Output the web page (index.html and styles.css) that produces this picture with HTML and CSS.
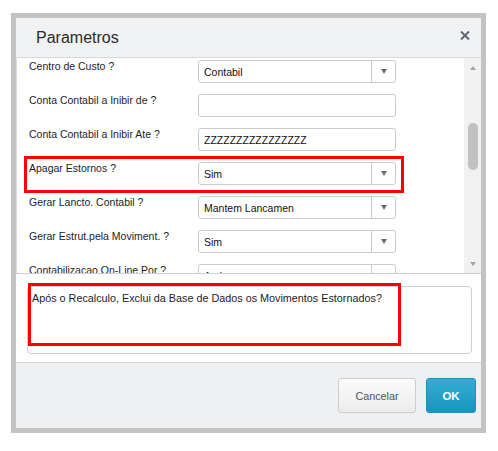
FILE: index.html
```html
<!DOCTYPE html>
<html lang="pt">
<head>
<meta charset="utf-8">
<title>Parametros</title>
<link rel="stylesheet" href="styles.css">
</head>
<body>
<div class="frame">
  <div class="dialog">
    <header class="dlg-head">
      <h1 class="dlg-title">Parametros</h1>
      <svg class="dlg-close" width="10" height="9" viewBox="0 0 10 9" aria-label="Fechar">
        <path d="M1 0.5 L9 8.5 M9 0.5 L1 8.5" stroke="#5f6570" stroke-width="2" fill="none"/>
      </svg>
    </header>

    <div class="params">
      <div class="param-list">
        <div class="param-row">
          <span class="param-label">Centro de Custo ?</span>
          <div class="field select"><span class="field-val">Contabil</span><span class="caret"></span></div>
        </div>
        <div class="param-row">
          <span class="param-label">Conta Contabil a Inibir de ?</span>
          <div class="field"><span class="field-val"></span></div>
        </div>
        <div class="param-row">
          <span class="param-label">Conta Contabil a Inibir Ate ?</span>
          <div class="field"><span class="field-val">ZZZZZZZZZZZZZZZZ</span></div>
        </div>
        <div class="param-row marked">
          <span class="param-label">Apagar Estornos ?</span>
          <div class="field select"><span class="field-val">Sim</span><span class="caret"></span></div>
          <span class="highlight hl-row"></span>
        </div>
        <div class="param-row">
          <span class="param-label">Gerar Lancto. Contabil ?</span>
          <div class="field select"><span class="field-val">Mantem Lancamen</span><span class="caret"></span></div>
        </div>
        <div class="param-row">
          <span class="param-label">Gerar Estrut.pela Moviment. ?</span>
          <div class="field select"><span class="field-val">Sim</span><span class="caret"></span></div>
        </div>
        <div class="param-row">
          <span class="param-label">Contabilizacao On-Line Por ?</span>
          <div class="field select"><span class="field-val">Ambos</span><span class="caret"></span></div>
        </div>
      </div>
      <div class="scrollbar">
        <span class="sb-up"></span>
        <span class="sb-thumb"></span>
        <span class="sb-down"></span>
      </div>
    </div>

    <div class="help">
      <p class="help-text">Após o Recalculo, Exclui da Base de Dados os Movimentos Estornados?</p>
      <span class="highlight hl-help"></span>
    </div>

    <footer class="dlg-foot">
      <button class="btn btn-cancel" type="button">Cancelar</button>
      <button class="btn btn-ok" type="button">OK</button>
    </footer>
  </div>
</div>
</body>
</html>
```

FILE: styles.css
```css
html, body {
  margin: 0;
  padding: 0;
  background: #ffffff;
}

body {
  font-family: "Liberation Sans", Arial, sans-serif;
  color: #222;
}

.frame {
  margin: 13px 0 0 11px;
  width: 465px;
  border: 5px solid #c3c3c3;
}

.dialog {
  position: relative;
  display: flex;
  flex-direction: column;
  background: #fff;
}

/* header */
.dlg-head {
  height: 39px;
  display: flex;
  align-items: center;
  justify-content: space-between;
  padding: 0 11px 0 20px;
  background: #f1f2f3;
  border-bottom: 1px solid #d5d7da;
}

.dlg-title {
  margin: 0;
  font-size: 16px;
  font-weight: normal;
  color: #2a2a2a;
  line-height: 39px;
}

.dlg-close {
  display: block;
  margin-top: -5px;
}

/* parameter list with its scrollbar */
.params {
  display: flex;
  height: 215px;
  overflow: hidden;
  border-left: 1px solid #dcdcdc;
  border-bottom: 1px solid #cfcfcf;
}

.param-list {
  flex: 1;
  padding: 2px 0 0 12px;
}

.param-row {
  position: relative;
  display: grid;
  grid-template-columns: 169px 198px;
  align-items: start;
  height: 34px;
}

.param-label {
  font-size: 10.5px;
  line-height: 13px;
  color: #1c1c28;
  white-space: nowrap;
}

.field {
  box-sizing: border-box;
  height: 23px;
  display: flex;
  align-items: center;
  border: 1px solid #cbcbcb;
  border-radius: 3px;
  background: #fff;
}

.field-val {
  flex: 1;
  padding-left: 5px;
  font-size: 10.5px;
  color: #111;
  white-space: nowrap;
  overflow: hidden;
}

.caret {
  align-self: stretch;
  width: 23px;
  border-left: 1px solid #cbcbcb;
  position: relative;
}

.caret::after {
  content: "";
  position: absolute;
  left: 9px;
  top: 8px;
  border-left: 3.5px solid transparent;
  border-right: 3.5px solid transparent;
  border-top: 5px solid #676c77;
}

.scrollbar {
  width: 17px;
  flex: none;
  background: #f1f1f1;
  position: relative;
  display: flex;
  flex-direction: column;
  align-items: center;
}

.sb-up {
  margin-top: 8px;
  width: 0;
  height: 0;
  border-left: 3.5px solid transparent;
  border-right: 3.5px solid transparent;
  border-bottom: 4px solid #a3a3a3;
}

.sb-thumb {
  margin-top: 53px;
  width: 10px;
  height: 47px;
  border-radius: 5px;
  background: #c1c1c1;
}

.sb-down {
  margin-top: auto;
  margin-bottom: 7px;
  width: 0;
  height: 0;
  border-left: 3.5px solid transparent;
  border-right: 3.5px solid transparent;
  border-top: 4px solid #a3a3a3;
}

/* help text */
.help {
  position: relative;
  box-sizing: border-box;
  margin: 12px 0 8px 11px;
  width: 445px;
  height: 68px;
  border: 1px solid #cfcfcf;
  border-radius: 4px;
  padding: 4px 4px;
}

.help-text {
  margin: 0;
  font-size: 10.8px;
  line-height: 14px;
  color: #1c1c28;
}

/* red annotation boxes */
.highlight {
  position: absolute;
  box-sizing: border-box;
  border: 3px solid #ff0000;
  pointer-events: none;
}

.hl-row {
  left: -5px;
  top: -6px;
  width: 380px;
  height: 37px;
}

.hl-help {
  left: 0;
  top: -4px;
  width: 373px;
  height: 63px;
}

/* footer */
.dlg-foot {
  display: flex;
  justify-content: flex-end;
  gap: 10px;
  padding: 15px 5px 15px 0;
  background: #eff0f1;
  border-top: 1px solid #d8d9db;
}

.btn {
  height: 35px;
  border-radius: 3px;
  font-family: "Liberation Sans", Arial, sans-serif;
  cursor: pointer;
}

.btn-cancel {
  width: 78px;
  border: 1px solid #cdcdcd;
  background: linear-gradient(#fbfbfb, #ececec);
  color: #505560;
  font-size: 10.8px;
}

.btn-ok {
  width: 50px;
  border: 1px solid #1a92b9;
  background: linear-gradient(#35acd2, #1696c0);
  color: #fff;
  font-weight: bold;
  font-size: 11.5px;
}
```
